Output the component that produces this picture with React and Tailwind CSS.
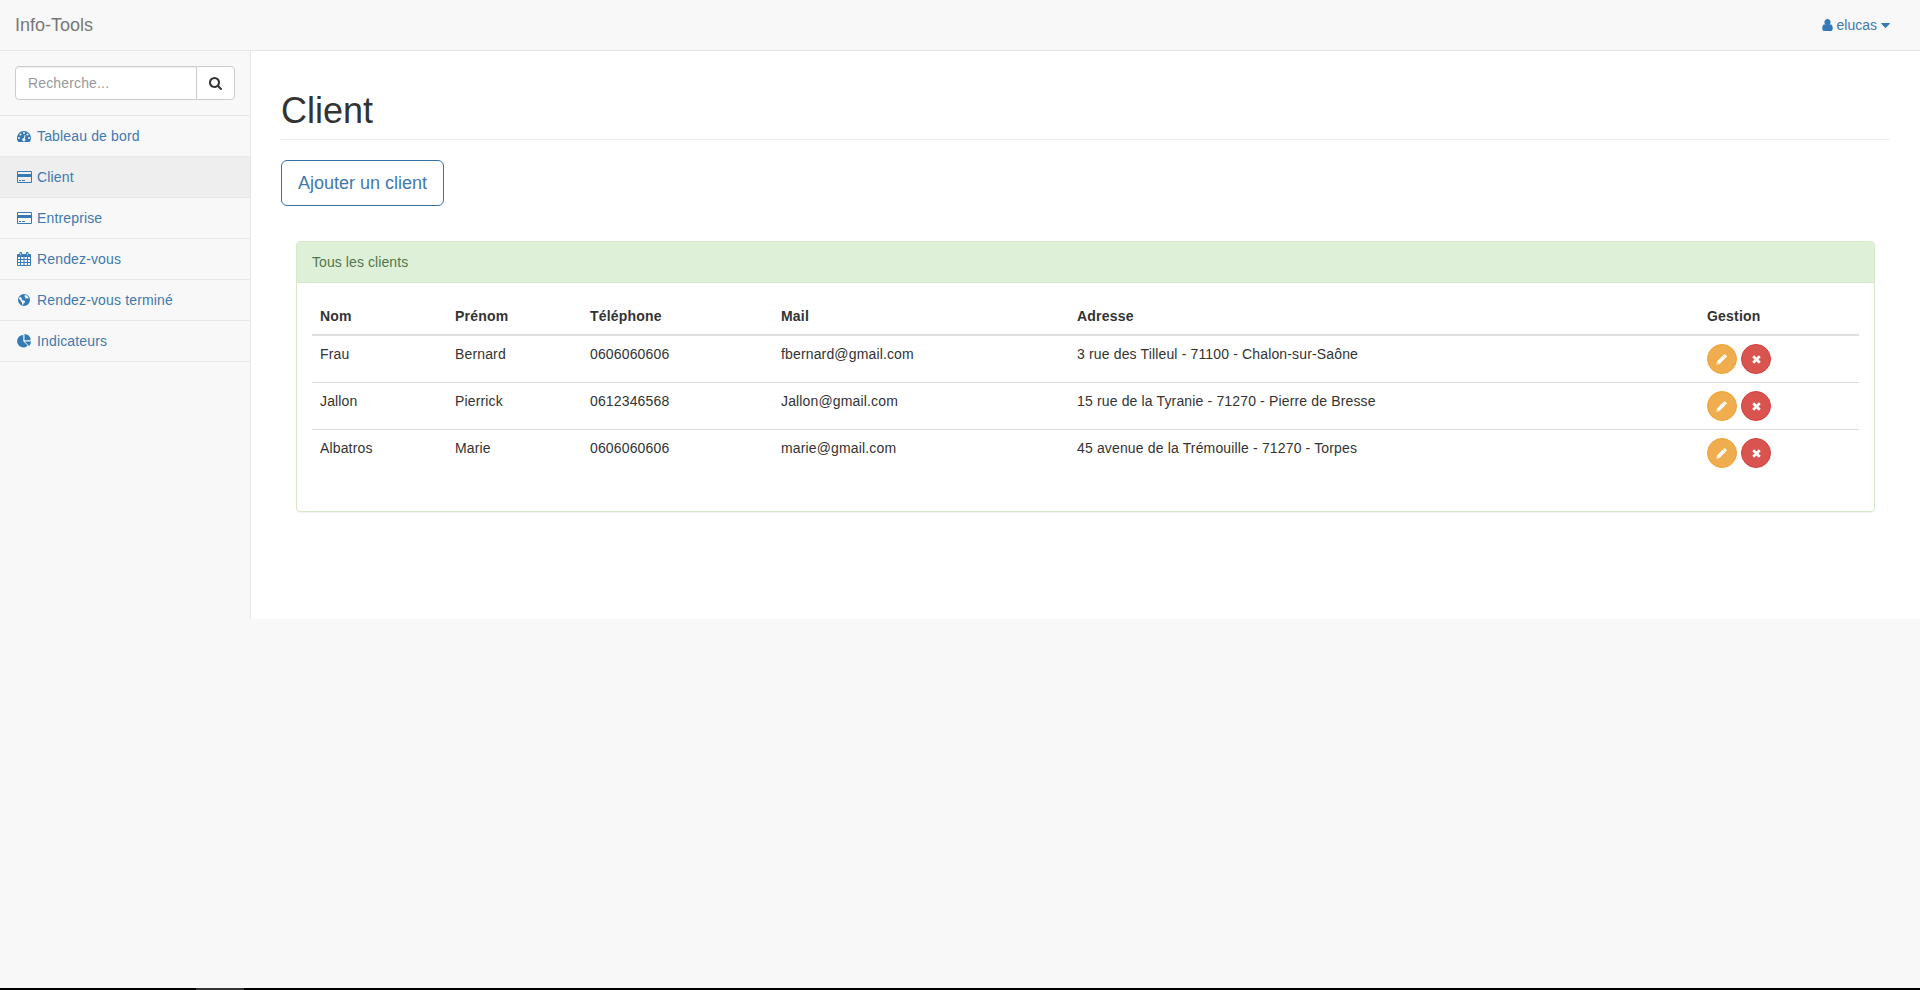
const ICONS = {
  search: {
    box: '0 0 1664 1664',
    d: 'M1152 704q0-185-131.5-316.5T704 256 387.5 387.5 256 704t131.5 316.5T704 1152t316.5-131.5T1152 704zm512 832q0 52-38 90t-90 38q-54 0-90-38l-343-342q-179 124-399 124-143 0-273.5-55.5t-225-150-150-225T0 704t55.5-273.5 150-225 225-150T704 0t273.5 55.5 225 150 150 225T1408 704q0 220-124 399l343 343q37 37 37 90z',
  },
  user: {
    box: '0 64 1280 1472',
    d: 'M1280 1271q0 109-62.5 187t-150.5 78H213q-88 0-150.5-78T0 1271q0-85 8.5-160.5t31.5-152 58.5-131 94-89T327 704q131 128 313 128t313-128q76 0 134.5 34.5t94 89 58.5 131 31.5 152 8.5 160.5zM1024 448q0 159-112.5 271.5T640 832 368.5 719.5 256 448t112.5-271.5T640 64t271.5 112.5T1024 448z',
  },
  caret: {
    box: '0 0 9 5',
    d: 'M.5 0h8q.4 0 .4.400 0 .2-.15.350L4.900 4.700q-.4.400-.8 0L.25.750Q.1.600.1.400.1 0 .5 0z',
  },
  dashboard: {
    box: '0 0 14 11',
    d: 'M7 0a7 7 0 0 1 7 7c0 1.35-.38 2.65-1.1 3.78a.5.5 0 0 1-.42.22H1.52a.5.5 0 0 1-.42-.22A7 7 0 0 1 7 0zM2 6a1 1 0 1 0 0 2 1 1 0 0 0 0-2zM3.5 2.5a1 1 0 1 0 0 2 1 1 0 0 0 0-2zM7 1a1 1 0 1 0 0 2 1 1 0 0 0 0-2zM10.5 2.5a1 1 0 1 0 0 2 1 1 0 0 0 0-2zM12 6a1 1 0 1 0 0 2 1 1 0 0 0 0-2zM8.1 3.9a.5.5 0 0 0-.6.37L6.7 7.26a1.5 1.5 0 1 0 .97.25l.79-2.98a.5.5 0 0 0-.36-.63z',
  },
  card: {
    box: '0 0 15 12',
    d: 'M1.25 0h12.5C14.44 0 15 .56 15 1.25v9.5c0 .69-.56 1.25-1.25 1.25H1.25C.56 12 0 11.44 0 10.75v-9.5C0 .56.56 0 1.25 0zM1 3h13V1.25a.25.25 0 0 0-.25-.25H1.25a.25.25 0 0 0-.25.25zM1 6v4.75c0 .14.11.25.25.25h12.5c.14 0 .25-.11.25-.25V6zM2 9h2v1H2zM5 9h3v1H5z',
  },
  calendar: {
    box: '0 0 14 14',
    d: 'M1 2h1.500v-.75C2.500.56 3.060 0 3.500 0h.5C4.690 0 5 .56 5 1.25V2h4v-.75C9 .56 9.310 0 10 0h.5c.44 0 1 .56 1 1.250V2H13a1 1 0 0 1 1 1v10a1 1 0 0 1-1 1H1a1 1 0 0 1-1-1V3a1 1 0 0 1 1-1zM1 5v2h2V5zM4 5v2h2.500V5zM7.500 5v2H10V5zM11 5v2h2V5zM1 8v2h2V8zM4 8v2h2.500V8zM7.500 8v2H10V8zM11 8v2h2V8zM1 11v2h2v-2zM4 11v2h2.500v-2zM7.500 11v2H10v-2zM11 11v2h2v-2zM3.500 1v2.500h.6V1zM9.900 1v2.500h.6V1z',
  },
  globe: {
    box: '0 0 12 12',
    d: 'M6 0a6 6 0 1 1 0 12A6 6 0 0 1 6 0zM1.400 3.100L3 3.300l.9 1-.4 1 1 .9 1.700.4.900 1-.6 1.300-1 .6-.5 1.400-.9-.4-.1-1.900-1.200-1.300-.3-1.400-1.400-1zM6.700.9l1.500.4 1.500 1.200.9 1.500-.6.7-1.100-.6-.8.700-.9-.4.300-1.100-.9-.5z',
  },
  pie: {
    box: '0 0 14 14',
    d: 'M6.300 1v6.200l4.400 4.400A6.200 6.200 0 1 1 6.300 1zM7.700 7.500H14a6.200 6.200 0 0 1-1.850 4.400zM7.500 0a6.200 6.200 0 0 1 6.200 6.300H7.500z',
  },
  pencil: {
    box: '0 0 12 12',
    d: 'M8.700.500q.6-.6 1.300 0l1.500 1.500q.6.7 0 1.300l-1 1L7.700 1.500zM7.300 1.900l2.800 2.800-6.200 6.200L.4 11.600l.7-3.500zM1.900 8.900l-.3 1.500 1.500-.3z',
  },
  cross: {
    box: '0 0 12 12',
    d: 'M2.900.3L6 3.400 9.100.3l2.600 2.600L8.600 6l3.100 3.100-2.600 2.600L6 8.600l-3.100 3.100L.3 9.100 3.400 6 .3 2.900z',
  },
};

function Icon({ name, className }) {
  const icon = ICONS[name];
  return (
    <svg viewBox={icon.box} className={className} fill="currentColor" fillRule="evenodd" aria-hidden="true">
      <path d={icon.d} />
    </svg>
  );
}

const MENU = [
  { label: 'Tableau de bord', icon: 'dashboard', size: 'h-[11px] w-[14px]' },
  { label: 'Client', icon: 'card', size: 'h-[12px] w-[15px]', active: true },
  { label: 'Entreprise', icon: 'card', size: 'h-[12px] w-[15px]' },
  { label: 'Rendez-vous', icon: 'calendar', size: 'h-[14px] w-[14px]' },
  { label: 'Rendez-vous terminé', icon: 'globe', size: 'h-[12px] w-[12px]' },
  { label: 'Indicateurs', icon: 'pie', size: 'h-[14px] w-[14px]' },
];

const COLUMNS = ['Nom', 'Prénom', 'Téléphone', 'Mail', 'Adresse', 'Gestion'];

const CLIENTS = [
  ['Frau', 'Bernard', '0606060606', 'fbernard@gmail.com', '3 rue des Tilleul - 71100 - Chalon-sur-Saône'],
  ['Jallon', 'Pierrick', '0612346568', 'Jallon@gmail.com', '15 rue de la Tyranie - 71270 - Pierre de Bresse'],
  ['Albatros', 'Marie', '0606060606', 'marie@gmail.com', '45 avenue de la Trémouille - 71270 - Torpes'],
];

function Navbar() {
  return (
    <header className="flex h-[51px] items-center justify-between border-b border-[#e7e7e7] pl-[15px] pr-[30px]">
      <a href="#" className="text-[18px] leading-5 tracking-normal text-[#777]">Info-Tools</a>
      <a href="#" className="flex items-center tracking-normal text-[#337ab7]">
        <Icon name="user" className="h-[12px] w-[11px]" />
        <span className="ml-1 text-[#4178ae]">elucas</span>
        <Icon name="caret" className="ml-1 h-[5px] w-[9px]" />
      </a>
    </header>
  );
}

function Sidebar() {
  return (
    <aside className="w-[250px] shrink-0">
      <div className="flex border-b border-[#e7e7e7] p-[15px]">
        <input
          placeholder="Recherche..."
          className="h-[34px] w-[182px] rounded-l border border-[#ccc] bg-white px-3 text-[#555] shadow-[inset_0_1px_1px_rgba(0,0,0,0.075)] placeholder:text-[#999]"
        />
        <button className="-ml-px flex h-[34px] w-[39px] items-center justify-center rounded-r border border-[#ccc] bg-white text-[#333]">
          <Icon name="search" className="h-[13px] w-[13px]" />
        </button>
      </div>
      <nav>
        {MENU.map((item) => (
          <a
            key={item.label}
            href="#"
            className={`flex h-[41px] items-center border-b border-[#e7e7e7] pl-4 text-[#337ab7] ${item.active ? 'bg-[#eee]' : ''}`}
          >
            <span className="flex w-4 justify-center">
              <Icon name={item.icon} className={item.size} />
            </span>
            <span className="ml-[5px] text-[#4178ae]">{item.label}</span>
          </a>
        ))}
      </nav>
    </aside>
  );
}

function ClientTable() {
  return (
    <table className="w-full table-fixed border-separate border-spacing-0 text-left">
      <colgroup>
        <col className="w-[135px]" />
        <col className="w-[135px]" />
        <col className="w-[191px]" />
        <col className="w-[296px]" />
        <col className="w-[630px]" />
        <col />
      </colgroup>
      <thead>
        <tr>
          {COLUMNS.map((name) => (
            <th key={name} className="border-b-2 border-[#ddd] p-2 font-bold tracking-[0.2px]">{name}</th>
          ))}
        </tr>
      </thead>
      <tbody>
        {CLIENTS.map((client, index) => {
          const line = index < CLIENTS.length - 1 ? 'border-b border-[#ddd]' : '';
          return (
            <tr key={client[0]}>
              {client.map((value, column) => (
                <td key={column} className={`p-2 align-top ${line}`}>{value}</td>
              ))}
              <td className={`p-2 align-top ${line}`}>
                <div className="flex gap-1">
                  <button className="flex size-[30px] items-center justify-center rounded-full border border-[#eea236] bg-[#f0ad4e] pr-px text-white">
                    <Icon name="pencil" className="size-[11px]" />
                  </button>
                  <button className="flex size-[30px] items-center justify-center rounded-full border border-[#d43f3a] bg-[#d9534f] text-white">
                    <Icon name="cross" className="size-[9px]" />
                  </button>
                </div>
              </td>
            </tr>
          );
        })}
      </tbody>
    </table>
  );
}

export default function App() {
  return (
    <div className="flex h-[990px] flex-col bg-[#f8f8f8] font-['Liberation_Sans',Arial,sans-serif] text-[14px] leading-5 tracking-[0.15px] text-[#333]">
      <Navbar />
      <div className="flex">
        <Sidebar />
        <main className="h-[568px] grow border-l border-[#e7e7e7] bg-white px-[30px]">
          <h1 className="mt-10 h-[49px] border-b border-[#eee] text-[36px] leading-[39px] tracking-normal">Client</h1>
          <button className="mt-5 h-[46px] rounded-md border border-[#39709f] bg-white px-4 text-[18px] leading-6 tracking-normal text-[#4178ae]">
            Ajouter un client
          </button>
          <section className="mx-[15px] mt-[35px] h-[271px] rounded border border-[#d6e9c6] shadow-[0_1px_1px_rgba(0,0,0,0.05)]">
            <h2 className="rounded-t-[3px] border-b border-[#d6e9c6] bg-[#dff0d8] px-[15px] py-[10px] tracking-[0.08px] text-[#4f7650]">
              Tous les clients
            </h2>
            <div className="p-[15px]">
              <ClientTable />
            </div>
          </section>
        </main>
      </div>
      <footer className="mt-auto flex h-[2px] bg-black pl-[196px]">
        <span className="w-12 bg-[#333]" />
      </footer>
    </div>
  );
}
